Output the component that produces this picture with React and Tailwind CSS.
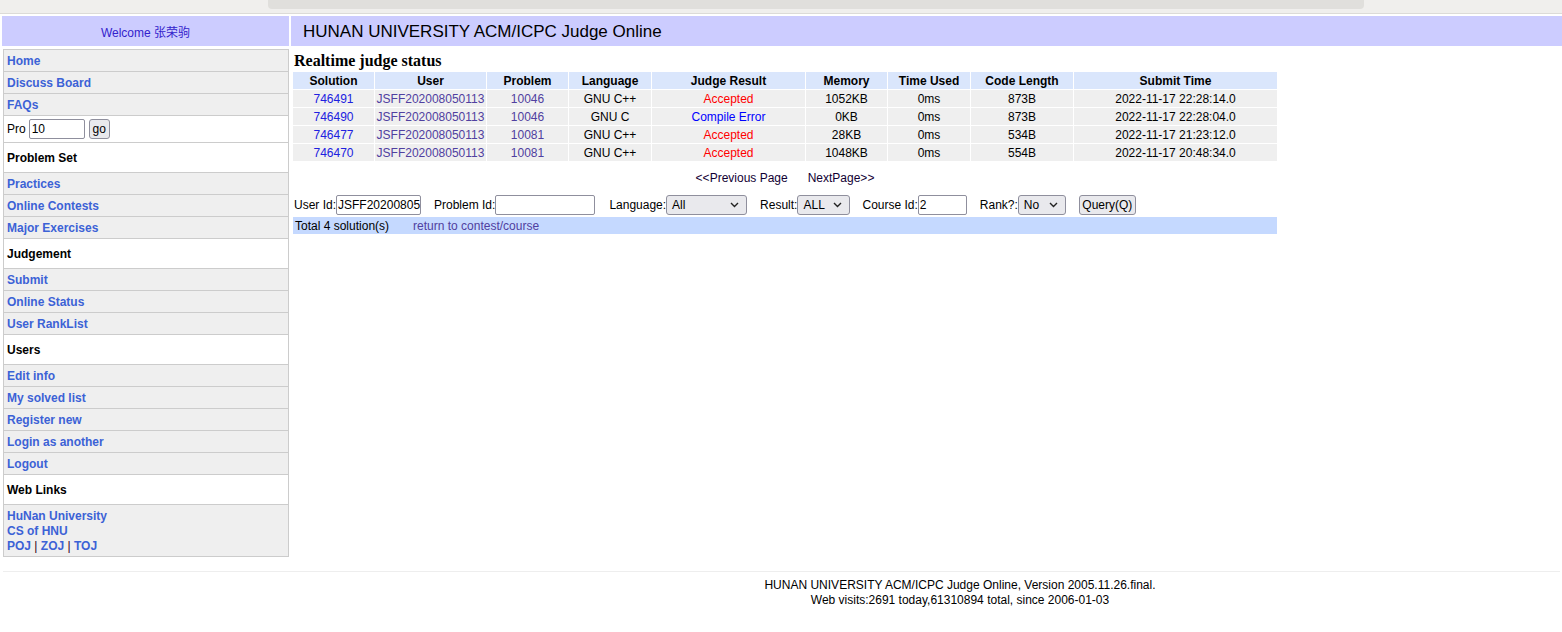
import React from "react";

const F = { fontFamily: '"Liberation Sans", Arial, "Noto Sans CJK SC", sans-serif' };

const rows = [
  ["746491", "JSFF202008050113", "10046", "GNU C++", "Accepted", "1052KB", "0ms", "873B", "2022-11-17 22:28:14.0"],
  ["746490", "JSFF202008050113", "10046", "GNU C", "Compile Error", "0KB", "0ms", "873B", "2022-11-17 22:28:04.0"],
  ["746477", "JSFF202008050113", "10081", "GNU C++", "Accepted", "28KB", "0ms", "534B", "2022-11-17 21:23:12.0"],
  ["746470", "JSFF202008050113", "10081", "GNU C++", "Accepted", "1048KB", "0ms", "554B", "2022-11-17 20:48:34.0"],
];

const heads = ["Solution", "User", "Problem", "Language", "Judge Result", "Memory", "Time Used", "Code Length", "Submit Time"];

function LinkRow({ children }) {
  return (
    <div className="h-[22px] border-b border-[#cccccc] bg-[#efefef] pl-[3px] flex items-center text-[12px] font-bold text-[#3c62d6]">
      {children}
    </div>
  );
}

function HeadRow({ children }) {
  return (
    <div className="h-[30px] border-b border-[#cccccc] bg-white pl-[3px] flex items-center text-[12px] font-bold text-black">
      {children}
    </div>
  );
}

function Chevron() {
  return (
    <svg width="9" height="6" viewBox="0 0 9 6" className="shrink-0">
      <path d="M1 1 L4.5 4.5 L8 1" fill="none" stroke="#222" strokeWidth="1.4" />
    </svg>
  );
}

function Select({ w, value }) {
  return (
    <div
      className="h-[20px] border border-[#8f8f9d] rounded-[3px] bg-[#e9e9ed] flex items-center justify-between pl-[5px] pr-[7px] text-[12px] text-black"
      style={{ width: w }}
    >
      <span>{value}</span>
      <Chevron />
    </div>
  );
}

function Input({ w, value }) {
  return (
    <div
      className="h-[20px] border border-[#8f8f9d] rounded-[2px] bg-white flex items-center pl-[1px] text-[12px] text-black overflow-hidden whitespace-nowrap"
      style={{ width: w }}
    >
      {value}
    </div>
  );
}

export default function App() {
  return (
    <div className="w-[1562px] h-[632px] bg-white overflow-hidden" style={F}>
      {/* browser chrome remnant */}
      <div className="h-[13px] bg-[#f0efed] flex">
        <div className="w-[268px]" />
        <div className="w-[1096px] h-[9px] bg-[#e0dfdc] rounded-b-[4px]" />
      </div>
      <div className="h-[1px] bg-[#dcdbd8]" />

      {/* header */}
      <div className="flex gap-[2px] pl-[2px] mt-[2px]">
        <div className="w-[287px] h-[30px] bg-[#ccccff] flex items-center justify-center pt-[3px] text-[12px] text-[#3322cc]">
          Welcome 张荣驹
        </div>
        <div className="flex-1 h-[30px] bg-[#ccccff] flex items-center pl-[12px] pt-[2px] text-[17px] text-black">
          HUNAN UNIVERSITY ACM/ICPC Judge Online
        </div>
      </div>

      <div className="flex mt-[3px]">
        {/* sidebar */}
        <div className="ml-[3px] w-[286px] border-x border-t border-[#cccccc] shrink-0">
          <LinkRow>Home</LinkRow>
          <LinkRow>Discuss Board</LinkRow>
          <LinkRow>FAQs</LinkRow>
          <div className="h-[27px] border-b border-[#cccccc] bg-white pl-[3px] flex items-center text-[12px] text-black">
            <span>Pro</span>
            <div className="ml-[3px] w-[56px] h-[20px] border border-[#8f8f9d] rounded-[2px] flex items-center pl-[2px]">10</div>
            <div className="ml-[4px] w-[21px] h-[20px] border border-[#8f8f9d] rounded-[3px] bg-[#e9e9ed] flex items-center justify-center">go</div>
          </div>
          <HeadRow>Problem Set</HeadRow>
          <LinkRow>Practices</LinkRow>
          <LinkRow>Online Contests</LinkRow>
          <LinkRow>Major Exercises</LinkRow>
          <HeadRow>Judgement</HeadRow>
          <LinkRow>Submit</LinkRow>
          <LinkRow>Online Status</LinkRow>
          <LinkRow>User RankList</LinkRow>
          <HeadRow>Users</HeadRow>
          <LinkRow>Edit info</LinkRow>
          <LinkRow>My solved list</LinkRow>
          <LinkRow>Register new</LinkRow>
          <LinkRow>Login as another</LinkRow>
          <LinkRow>Logout</LinkRow>
          <HeadRow>Web Links</HeadRow>
          <div className="h-[52px] border-b border-[#cccccc] bg-[#efefef] pl-[3px] pt-[4px] text-[12px] font-bold text-[#3c62d6] leading-[15px]">
            <div>HuNan University</div>
            <div>CS of HNU</div>
            <div>
              POJ <span className="font-normal text-[#330022]">|</span> ZOJ{" "}
              <span className="font-normal text-[#330022]">|</span> TOJ
            </div>
          </div>
        </div>

        {/* content */}
        <div className="ml-[4px] w-[984px]">
          <div
            className="h-[23px] pl-[1px] pt-[2px] text-[16px] font-bold text-black leading-[19px]"
            style={{ fontFamily: '"Liberation Serif", "Times New Roman", serif' }}
          >
            Realtime judge status
          </div>
          <div className="grid grid-cols-[81px_111px_81px_82px_153px_81px_82px_102px_203px] gap-[1px] text-[12px]">
            {heads.map((h) => (
              <div key={h} className="h-[17px] bg-[#dae6fc] flex items-center justify-center font-bold text-black">
                {h}
              </div>
            ))}
            {rows.map((r) =>
              r.map((c, i) => {
                let color = "text-black";
                if (i === 0) color = "text-[#2020e0]";
                else if (i === 1 || i === 2) color = "text-[#5040a0]";
                else if (i === 4) color = c === "Accepted" ? "text-[#ff0000]" : "text-[#0000ff]";
                return (
                  <div key={r[0] + i} className={`h-[17px] bg-[#efefef] flex items-center justify-center ${color}`}>
                    {c}
                  </div>
                );
              })
            )}
          </div>

          <div className="mt-[8px] h-[18px] flex items-center justify-center gap-[20px] text-[12px] text-[#110033]">
            <span>&lt;&lt;Previous Page</span>
            <span>NextPage&gt;&gt;</span>
          </div>

          <div className="mt-[8px] h-[20px] flex items-center pl-[1px] text-[12px] text-black whitespace-nowrap">
            <span>User Id:</span>
            <Input w={85} value="JSFF20200805" />
            <span className="ml-[13px]">Problem Id:</span>
            <Input w={100} value="" />
            <span className="ml-[14px]">Language:</span>
            <Select w={81} value="All" />
            <span className="ml-[13px]">Result:</span>
            <Select w={53} value="ALL" />
            <span className="ml-[12px]">Course Id:</span>
            <Input w={49} value="2" />
            <span className="ml-[13px]">Rank?:</span>
            <Select w={48} value="No" />
            <div className="ml-[13px] w-[57px] h-[20px] border border-[#8f8f9d] rounded-[3px] bg-[#e9e9ed] flex items-center justify-center">
              Query(Q)
            </div>
          </div>

          <div className="mt-[2px] h-[17px] bg-[#c5d9ff] flex items-center pl-[2px] text-[12px]">
            <span className="text-black">Total 4 solution(s)</span>
            <span className="ml-[24px] text-[#5040a0]">return to contest/course</span>
          </div>
        </div>
      </div>

      {/* footer */}
      <div className="mx-[3px] mt-[14px] w-[1557px] h-[1px] bg-[#eeeeee]" />
      <div className="pl-[358px] pt-[6px] text-center text-[12px] leading-[15px] text-black">
        <div>HUNAN UNIVERSITY ACM/ICPC Judge Online, Version 2005.11.26.final.</div>
        <div>Web visits:2691 today,61310894 total, since 2006-01-03</div>
      </div>
    </div>
  );
}
